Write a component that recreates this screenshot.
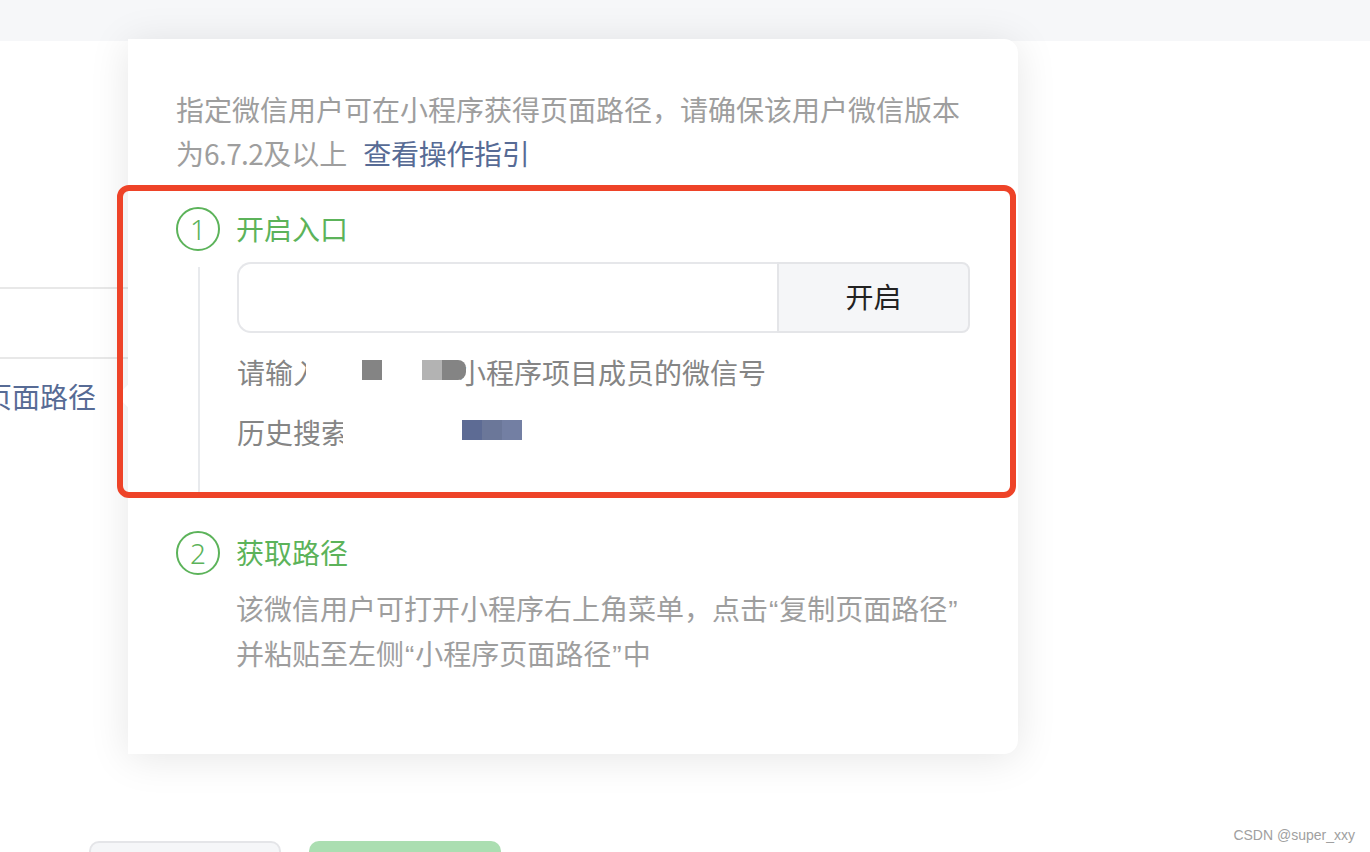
<div class="page">
  <header class="topbar"></header>

  <section class="form">
    <div class="row first"></div>
    <div class="row second"></div>
    <div class="row label-row"><span class="label">小程序页面路径</span></div>
  </section>

  <footer class="actions">
    <button class="btn plain" type="button"></button>
    <button class="btn primary" type="button"></button>
  </footer>

  <aside class="card">
    <span class="arrow"></span>
    <p class="intro">指定微信用户可在小程序获得页面路径，请确保该用户微信版本为<span class="ver">6.7.2</span>及以上<a class="link guide">查看操作指引</a></p>

    <div class="step-head one">
      <span class="num">1</span>
      <span class="title">开启入口</span>
    </div>
    <div class="step-body">
      <div class="search">
        <input class="field" type="text" />
        <button class="open" type="button">开启</button>
      </div>
      <div class="hint">
        <span class="cut cut-a">请输入</span>
        <i class="px g1 a"></i>
        <i class="px g2 b"></i>
        <i class="px g1 c"></i>
        <span class="rest">小程序项目成员的微信号</span>
      </div>
      <div class="history">
        <span class="cut cut-b">历史搜索</span>
        <i class="px n1 d"></i>
        <i class="px n2"></i>
        <i class="px n3"></i>
      </div>
    </div>

    <div class="step-head two">
      <span class="num">2</span>
      <span class="title">获取路径</span>
    </div>
    <p class="desc">该微信用户可打开小程序右上角菜单，点击<span class="q">“</span>复制页面路径<span class="q">”</span><br />并粘贴至左侧<span class="q">“</span>小程序页面路径<span class="q">”</span>中</p>
  </aside>

  <div class="mark"></div>
  <div class="watermark">CSDN @super_xxy</div>
</div>

<style>
  :global(body) {
    margin: 0;
    background: #fff;
  }
  .page {
    position: relative;
    width: 1370px;
    height: 852px;
    overflow: hidden;
    background: #fff;
    font-family: "Noto Sans CJK SC", "Noto Sans", sans-serif;
    font-size: 28px;
  }
  .topbar {
    height: 41px;
    background: #f6f7f9;
  }
  .form {
    width: 600px;
  }
  .row {
    box-sizing: border-box;
  }
  .first {
    height: 248px;
    border-bottom: 2px solid #e8e8e8;
  }
  .second {
    height: 70px;
    border-bottom: 2px solid #e8e8e8;
  }
  .label-row {
    display: flex;
    justify-content: flex-end;
    width: 96px;
    height: 74px;
    align-items: center;
    overflow: hidden;
  }
  .label {
    flex: none;
    color: #576b95;
    line-height: 44px;
  }
  .actions {
    display: flex;
    gap: 28px;
    margin: 408px 0 0 89px;
  }
  .btn {
    box-sizing: border-box;
    width: 192px;
    height: 60px;
    border-radius: 10px;
    padding: 0;
  }
  .plain {
    background: #f5f6f8;
    border: 2px solid #e4e5e8;
  }
  .primary {
    background: #abdeb1;
    border: 0;
  }
  .card {
    position: absolute;
    left: 128px;
    top: 39px;
    box-sizing: border-box;
    width: 890px;
    height: 715px;
    padding: 48px 48px 0;
    background: #fff;
    border-radius: 0 14px 14px 0;
    box-shadow: 0 4px 40px rgba(0, 0, 0, 0.1);
  }
  .arrow {
    position: absolute;
    left: -8px;
    top: 349px;
    width: 16px;
    height: 16px;
    background: #fff;
    transform: rotate(45deg);
  }
  .intro {
    position: relative;
    margin: 0;
    width: 800px;
    color: #9e9e9e;
    line-height: 44px;
  }
  .ver {
    letter-spacing: -0.6px;
  }
  .link {
    color: #576b95;
  }
  .guide {
    margin-left: 16px;
    letter-spacing: -0.3px;
  }
  .step-head {
    position: relative;
    display: flex;
    align-items: center;
    gap: 16px;
    height: 44px;
    color: #5cb35a;
  }
  .one {
    margin-top: 32px;
  }
  .two {
    margin-top: 38px;
  }
  .title {
    padding-bottom: 2px;
  }
  .num {
    box-sizing: border-box;
    width: 44px;
    height: 44px;
    display: flex;
    align-items: center;
    justify-content: center;
    border: 2px solid #5cb35a;
    border-radius: 50%;
    font-family: "Noto Sans", sans-serif;
    font-size: 28px;
    font-weight: 300;
  }
  .step-body {
    position: relative;
    display: flex;
    flex-direction: column;
    box-sizing: border-box;
    height: 226px;
    margin: 16px 0 0 22px;
    padding-left: 37px;
    border-left: 2px solid #e8eaed;
  }
  .search {
    display: flex;
    flex: none;
    height: 71px;
    margin-top: -5px;
  }
  .field {
    box-sizing: border-box;
    width: 540px;
    height: 71px;
    padding: 0;
    background: #fff;
    border: 2px solid #e6e7ea;
    border-right: 0;
    border-radius: 14px 0 0 14px;
    outline: none;
  }
  .open {
    box-sizing: border-box;
    width: 193px;
    height: 71px;
    padding: 0 0 3px;
    background: #f5f6f8;
    border: 2px solid #e4e5e8;
    border-radius: 0 8px 8px 0;
    color: #222;
    font: inherit;
  }
  .hint,
  .history {
    position: relative;
    display: flex;
    flex: none;
    align-items: center;
    height: 44px;
    color: #858585;
    line-height: 44px;
  }
  .hint {
    margin-top: 17px;
  }
  .history {
    margin-top: 16px;
  }
  .cut {
    flex: none;
    overflow: hidden;
    white-space: nowrap;
  }
  .cut-a {
    width: 69px;
  }
  .cut-b {
    width: 106px;
  }
  .px {
    flex: none;
    display: block;
    position: relative;
    z-index: 1;
    width: 20px;
    height: 20px;
    top: -2px;
  }
  .a {
    margin-left: 56px;
  }
  .b {
    margin-left: 40px;
  }
  .c {
    width: 24px;
    border-radius: 0 8px 8px 0;
  }
  .g1 {
    background: #848484;
  }
  .g2 {
    background: #b3b3b3;
  }
  .rest {
    flex: none;
    margin-left: -8px;
    white-space: nowrap;
  }
  .d {
    margin-left: 119px;
  }
  .n1 {
    background: #5d6b94;
  }
  .n2 {
    background: #6b7799;
  }
  .n3 {
    background: #737fa3;
  }
  .desc {
    position: relative;
    margin: 11px 0 0;
    padding-left: 60px;
    width: 760px;
    color: #9e9e9e;
    line-height: 45px;
    white-space: nowrap;
  }
  .q {
    font-family: "Liberation Sans", sans-serif;
    line-height: 1;
    margin: 0 1px;
  }
  .mark {
    position: absolute;
    left: 117px;
    top: 185px;
    box-sizing: border-box;
    width: 899px;
    height: 313px;
    border: 6px solid #ee4328;
    border-radius: 12px;
  }
  .watermark {
    position: absolute;
    right: 15px;
    top: 826px;
    color: #a0a0a0;
    font-family: "Liberation Sans", sans-serif;
    font-size: 14px;
    line-height: 18px;
  }
</style>
